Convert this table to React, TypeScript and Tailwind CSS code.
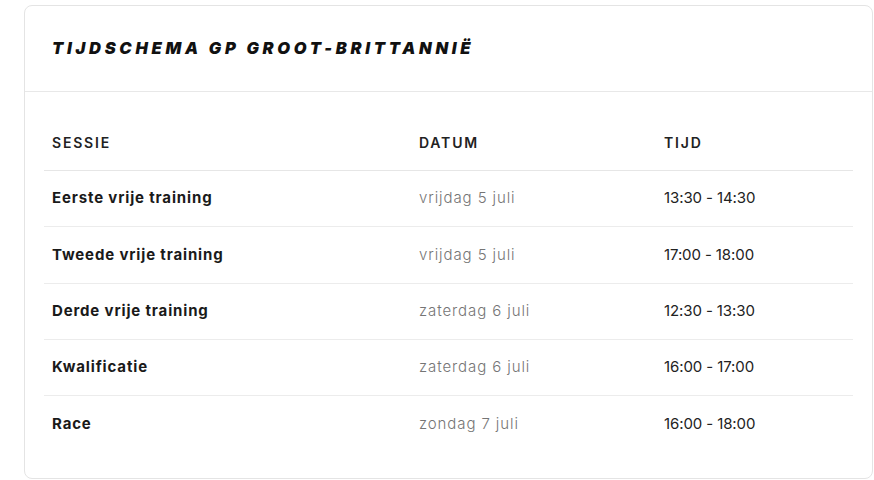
import React from "react";

const rows = [
  ["Eerste vrije training", "vrijdag 5 juli", "13:30 - 14:30"],
  ["Tweede vrije training", "vrijdag 5 juli", "17:00 - 18:00"],
  ["Derde vrije training", "zaterdag 6 juli", "12:30 - 13:30"],
  ["Kwalificatie", "zaterdag 6 juli", "16:00 - 17:00"],
  ["Race", "zondag 7 juli", "16:00 - 18:00"],
];

export default function App() {
  return (
    <div className="w-[874px] h-[480px] bg-white pt-[5px] pl-[24px] pr-[1px]" style={{ fontFamily: "Inter, 'Open Sans', sans-serif" }}>
      <div className="h-[474px] border border-[#e4e4e4] rounded-lg bg-white">
        <div className="h-[86px] border-b border-[#e8e8e8] flex items-center pl-[27px]">
          <h2 className="text-[16.5px] font-black italic uppercase tracking-[3.7px] text-[#111]">Tijdschema GP Groot-Brittannië</h2>
        </div>
        <div className="pt-[22px] px-[19px]">
          <div className="grid grid-cols-[367px_245px_1fr] h-[57px] items-center border-b border-[#e6e6e6] text-[14px] font-semibold tracking-[1.8px] text-[#222]">
            <div className="pl-2">SESSIE</div>
            <div className="pl-2">DATUM</div>
            <div className="pl-2">TIJD</div>
          </div>
          {rows.map((r, i) => (
            <div key={i} className={`grid grid-cols-[367px_245px_1fr] h-[56.3px] items-center text-[15px] ${i < rows.length - 1 ? "border-b border-[#ececec]" : ""}`}>
              <div className="pl-2 font-bold tracking-[0.85px] text-[#1a1a1a]">{r[0]}</div>
              <div className="pl-2 font-light tracking-[0.9px] text-[#757575]">{r[1]}</div>
              <div className="pl-2 tracking-[-0.1px] text-[#222]">{r[2]}</div>
            </div>
          ))}
        </div>
      </div>
    </div>
  );
}
